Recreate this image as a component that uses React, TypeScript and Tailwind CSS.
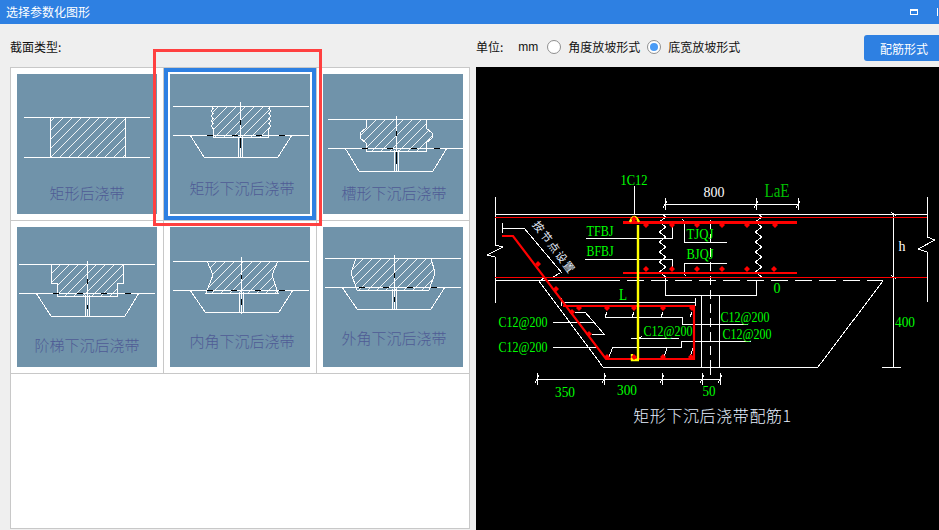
import React from "react";

type Pt = [number, number];
type Tile = {
  id: string;
  label: string;
  labelX: number;
  labelY: number;
  top: number;
  bottom: number;
  x1: number;
  x2: number;
  block: Pt[];
  cx: number;
  cy1: number;
  cy2: number;
  trap: Pt[];
  dashes: number[];
  vdash: number[][];
  selected?: boolean;
};

const pts = (p: Pt[]) => p.map((a) => a.join(",")).join(" ");

function wavy(x: number, y1: number, y2: number, dir: number): Pt[] {
  const out: Pt[] = [];
  let i = 0;
  for (let y = y1; y < y2; y += 2.5) {
    out.push([x + (i % 2 === 0 ? 0 : dir * 2), y]);
    i++;
  }
  return out;
}

const tiles: Tile[] = [
  {
    id: "a", label: "矩形后浇带", labelX: 70, labelY: 125, top: 43, bottom: 83, x1: 7, x2: 133,
    block: [[33, 43], [108, 43], [108, 83], [33, 83]],
    cx: 0, cy1: 0, cy2: 0, trap: [], dashes: [], vdash: [],
  },
  {
    id: "b", label: "矩形下沉后浇带", labelX: 72, labelY: 120, top: 32, bottom: 61, x1: 3, x2: 139, selected: true,
    block: [...wavy(41, 32, 56, 1), [43, 56], [43, 63], [98, 63], [98, 56], ...wavy(101, 32, 56, -1).reverse()],
    cx: 70, cy1: 28, cy2: 84,
    trap: [[20, 61], [34, 83], [108, 83], [122, 61]],
    dashes: [37, 62, 86, 109], vdash: [[46, 51], [64, 74]],
  },
  {
    id: "c", label: "槽形下沉后浇带", labelX: 71, labelY: 125, top: 45, bottom: 74, x1: 5, x2: 140,
    block: [[43, 45], [43, 54], [37, 59], [37, 64], [43, 69], [43, 77], [103, 77], [103, 69], [109, 64], [109, 59], [103, 54], [103, 45]],
    cx: 73, cy1: 42, cy2: 97,
    trap: [[22, 74], [36, 97], [110, 97], [124, 74]],
    dashes: [39, 64, 88, 111], vdash: [[57, 62], [78, 90]],
  },
  {
    id: "d", label: "阶梯下沉后浇带", labelX: 70, labelY: 124, top: 37, bottom: 66, x1: 2, x2: 138,
    block: [[34, 37], [34, 56], [40, 56], [40, 69], [100, 69], [100, 56], [106, 56], [106, 37]],
    cx: 70, cy1: 34, cy2: 89,
    trap: [[19, 66], [34, 89], [108, 89], [122, 66]],
    dashes: [36, 60, 84, 108], vdash: [[52, 57], [78, 82]],
  },
  {
    id: "e", label: "内角下沉后浇带", labelX: 72, labelY: 120, top: 34, bottom: 63, x1: 3, x2: 139,
    block: [[37, 34], [43, 48], [36, 66], [108, 66], [102, 48], [108, 34]],
    cx: 71, cy1: 30, cy2: 87,
    trap: [[20, 63], [35, 85], [109, 85], [123, 63]],
    dashes: [37, 61, 85, 109], vdash: [[48, 52], [72, 78]],
  },
  {
    id: "f", label: "外角下沉后浇带", labelX: 71, labelY: 117, top: 31, bottom: 60, x1: 2, x2: 138,
    block: [[33, 31], [28, 46], [34, 63], [106, 63], [112, 46], [108, 31]],
    cx: 71, cy1: 28, cy2: 83,
    trap: [[19, 60], [34, 82], [108, 82], [122, 60]],
    dashes: [36, 60, 84, 108], vdash: [[46, 51], [70, 75]],
  },
];

function Thumb({ t }: { t: Tile }) {
  const pid = `hatch-${t.id}`;
  return (
    <svg width="140" height="140" viewBox="0 0 140 140" className="block bg-[#7093aa]">
      <defs>
        <pattern id={pid} patternUnits="userSpaceOnUse" width="9" height="9">
          <path d="M-1 10L10 -1" stroke="#fff" strokeWidth="0.9" />
        </pattern>
      </defs>
      <g shapeRendering="crispEdges" fill="none" stroke="#fff" strokeWidth="1">
        <polygon points={pts(t.block)} fill={`url(#${pid})`} />
        <line x1={t.x1} x2={t.x2} y1={t.top} y2={t.top} />
        <line x1={t.x1} x2={t.x2} y1={t.bottom} y2={t.bottom} />
      </g>
      {t.trap.length > 0 && (
        <g fill="none" stroke="#fff" strokeWidth="1" shapeRendering="crispEdges">
          <polyline points={pts(t.trap)} />
          <line x1={t.cx} x2={t.cx} y1={t.cy1} y2={t.cy2} />
          <line x1={t.cx - 2} x2={t.cx - 2} y1={t.bottom + 2} y2={t.trap[1][1]} />
          <line x1={t.cx + 2} x2={t.cx + 2} y1={t.bottom + 2} y2={t.trap[1][1]} />
        </g>
      )}
      <g stroke="#000" strokeWidth="1" shapeRendering="crispEdges">
        {t.dashes.map((d) => (
          <line key={d} x1={d} x2={d + 6} y1={t.bottom} y2={t.bottom} />
        ))}
        {t.vdash.map((v) => (
          <line key={v[0]} x1={t.cx} x2={t.cx} y1={v[0]} y2={v[1]} />
        ))}
      </g>
      <text x={t.labelX} y={t.labelY} textAnchor="middle" fontSize="15" fontWeight="300" fill="#4f5b95">
        {t.label}
      </text>
    </svg>
  );
}

function zig(x: number, y1: number, y2: number): string {
  let s = `M${x} ${y1}`;
  let i = 0;
  for (let y = y1 + 3; y <= y2; y += 5) {
    s += `L${x + (i % 2 === 0 ? 4 : -3)} ${y}`;
    i++;
  }
  return s;
}

const white = [
  "M495 214H927",
  "M495 197V245L503 247L487 255L495 257V303",
  "M927 197V237L935 240L918 249L927 252V302",
  "M495 280H603",
  "M893 214V367M882 367H901M891 212L896 216M891 275L896 279",
  "M883 281L818 367H603L539 281",
  "M756 280V295H665V277M665 198V210M756 198V210M798 198V210M665 204H798",
  "M663 208L667 201M754 208L758 201M796 208L800 201",
  "M634 186V214",
  zig(662, 214, 277),
  zig(758, 214, 277),
  "M503 228H524L562 273M560 273L553 277M502 223V233M539 281L546 277",
  "M586 238H672V225M585 259H672V270",
  "M684 223V242H727M684 274V263H727M682 219L687 224M682 272L686 276",
  "M561 302H695M561 298V306M695 298V306",
  "M605 317H682V324H701M607 312L605 317M634 312L632 317M663 312L661 317M692 312L690 317",
  "M575 312H585L604 334H592",
  "M553 322H594M553 347H598",
  "M608 359L613 347H681V341H701M667 348L664 357M693 348L690 357",
  "M631 338H679M637 340L642 336",
  "M701 295V367M719 295V367M701 324H748M701 341H751",
  "M537 379H720M537 373V385M604 373V385M662 373V385M702 373V385M720 373V385M710 367V375",
  "M535 383L539 375M602 383L606 375M660 383L664 375M700 383L704 375M718 383L722 375",
];

const dots: Pt[] = [
  [634, 219], [646, 225], [672, 225], [697, 225], [722, 225], [747, 225], [775, 225],
  [646, 269], [672, 269], [697, 269], [722, 269], [747, 269], [774, 269],
  [538, 264], [556, 289], [572, 312], [589, 334], [607, 357],
  [579, 308], [607, 308], [634, 308], [663, 308], [692, 308],
  [634, 357], [663, 357], [691, 357],
];

const green: { s: string; x: number; y: number; w: number; c?: string; h?: number }[] = [
  { s: "1C12", x: 634, y: 185, w: 27 },
  { s: "TFBJ", x: 600, y: 236, w: 27 },
  { s: "BFBJ", x: 600, y: 256, w: 27 },
  { s: "TJQJ", x: 700, y: 239, w: 27 },
  { s: "BJQJ", x: 700, y: 259, w: 27 },
  { s: "0", x: 777, y: 293, w: 7 },
  { s: "L", x: 623, y: 300, w: 8, h: 16 },
  { s: "C12@200", x: 523, y: 327, w: 49 },
  { s: "C12@200", x: 523, y: 352, w: 49 },
  { s: "C12@200", x: 668, y: 336, w: 49 },
  { s: "C12@200", x: 745, y: 322, w: 49 },
  { s: "C12@200", x: 747, y: 339, w: 49 },
  { s: "400", x: 905, y: 327, w: 20 },
  { s: "350", x: 565, y: 397, w: 20 },
  { s: "300", x: 627, y: 395, w: 20 },
  { s: "50", x: 709, y: 396, w: 13 },
  { s: "LaE", x: 777, y: 197, w: 25, c: "#00c000", h: 18 },
];

function CadLabel({ s, x, y, w, c = "#00ff00", h = 15 }: { s: string; x: number; y: number; w: number; c?: string; h?: number }) {
  return (
    <text
      x={x - w / 2}
      y={y}
      textLength={w}
      lengthAdjust="spacingAndGlyphs"
      fontFamily="'Liberation Serif', serif"
      fontSize={h}
      fill={c}
    >
      {s}
    </text>
  );
}

function CadDrawing() {
  return (
    <svg width="463" height="463" viewBox="476 67 463 463" className="block">
      <g fill="none" stroke="#fff" strokeWidth="1" shapeRendering="crispEdges">
        <path d={white.join("")} />
        <path d="M603 280H883" strokeDasharray="17 7" />
        <path d="M710 220V372" strokeDasharray="9 5" />
      </g>
      <g stroke="#ff0000" fill="none" shapeRendering="crispEdges">
        <path d="M495 217H927M495 277H927" strokeWidth="1" />
        <path d="M623 222.5H797M623 273H797" strokeWidth="2.5" />
      </g>
      <path d="M502 236H513L606 359H694V306H563" stroke="#ff0000" strokeWidth="2.2" fill="none" />
      <path d="M638 225V359M632 354V360H639M630 222Q634 212 639 222" stroke="#ffff00" strokeWidth="2.4" fill="none" />
      <g fill="#ff0000">
        {dots.map((d) => (
          <path key={d.join("-")} d={`M${d[0]} ${d[1] - 3}L${d[0] + 3} ${d[1]}L${d[0]} ${d[1] + 3}L${d[0] - 3} ${d[1]}Z`} />
        ))}
      </g>
      {green.map((g, i) => (
        <CadLabel key={i} {...g} />
      ))}
      <CadLabel s="800" x={714} y={197} w={21} c="#ffffff" />
      <CadLabel s="h" x={902} y={251} w={7} c="#ffffff" />
      <text x={551} y={250} transform="rotate(53 551 250)" textAnchor="middle" fontSize="11" fill="#e8f0ff" letterSpacing="1.6">
        按节点设置
      </text>
      <text x={712.5} y={422} textAnchor="middle" fontSize="16" fontWeight="300" letterSpacing="0.6" fill="#e6f0ff">
        矩形下沉后浇带配筋1
      </text>
    </svg>
  );
}

function Radio({ checked, label }: { checked?: boolean; label: string }) {
  return (
    <div className="flex items-center gap-[7px]">
      <span className="flex h-[14px] w-[14px] items-center justify-center rounded-full border border-[#8f8f8f] bg-white">
        {checked && <span className="h-[8px] w-[8px] rounded-full bg-[#4a9bf5]" />}
      </span>
      <span className="text-[12px] leading-none text-[#111]">{label}</span>
    </div>
  );
}

export default function App() {
  return (
    <div className="relative h-[530px] w-[939px] overflow-hidden bg-[#efefef] font-['Noto_Sans_CJK_SC','Noto_Sans',sans-serif]">
      <div className="flex h-6 items-center justify-between bg-[#2e80e2] pl-[6px] text-[12px] text-white">
        <span>选择参数化图形</span>
        <div className="flex items-center gap-[19px]">
          <span className="h-[6px] w-[8px] border border-t-2 border-white" />
          <span className="h-[8px] w-[2px] border-l border-white" />
        </div>
      </div>
      <div className="flex">
        <div className="w-[476px] pl-[10px]">
          <div className="box-border flex h-[43px] items-center pt-[3px] text-[12px] text-[#111]">截面类型:</div>
          <div className="h-[462px] w-[460px] border border-[#c8c8c8] bg-white">
            <div className="grid grid-cols-[153px_153px_152px]">
              {tiles.map((t, i) => (
                <div
                  key={t.id}
                  className={`h-[153px] border-b border-[#c8c8c8] ${i % 3 === 2 ? "" : "border-r"}`}
                >
                  <div className={t.selected ? "box-border h-[152px] w-[152px] border-4 border-[#2e80e2] p-[2px]" : "p-[6px]"}>
                    <Thumb t={t} />
                  </div>
                </div>
              ))}
            </div>
          </div>
        </div>
        <div className="w-[463px]">
          <div className="box-border flex h-[43px] items-center pt-[3px]">
            <span className="text-[12px] text-[#111]">单位:</span>
            <span className="ml-[15px] mr-[9px] font-['Liberation_Sans',sans-serif] text-[12px] text-[#111]">mm</span>
            <div className="flex items-center gap-[7px]">
              <Radio label="角度放坡形式" />
              <Radio checked label="底宽放坡形式" />
            </div>
            <button className="ml-auto mr-[-2px] mt-[1px] flex h-[26px] w-[77px] items-start justify-start rounded-[3px] bg-[#2e80e2] pl-[16px] pt-[5px] text-[12px] leading-[18px] text-white">
              配筋形式
            </button>
          </div>
          <div className="h-[463px] w-[463px] bg-black">
            <CadDrawing />
          </div>
        </div>
      </div>
      <div className="pointer-events-none absolute left-[153px] top-[49px] h-[177px] w-[169px] border-[3px] border-[#ff4040]" />
    </div>
  );
}
